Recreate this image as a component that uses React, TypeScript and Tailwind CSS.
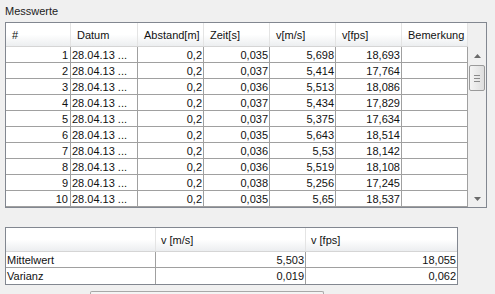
const rows = [
  ["1", "28.04.13 ...", "0,2", "0,035", "5,698", "18,693"],
  ["2", "28.04.13 ...", "0,2", "0,037", "5,414", "17,764"],
  ["3", "28.04.13 ...", "0,2", "0,036", "5,513", "18,086"],
  ["4", "28.04.13 ...", "0,2", "0,037", "5,434", "17,829"],
  ["5", "28.04.13 ...", "0,2", "0,037", "5,375", "17,634"],
  ["6", "28.04.13 ...", "0,2", "0,035", "5,643", "18,514"],
  ["7", "28.04.13 ...", "0,2", "0,036", "5,53", "18,142"],
  ["8", "28.04.13 ...", "0,2", "0,036", "5,519", "18,108"],
  ["9", "28.04.13 ...", "0,2", "0,038", "5,256", "17,245"],
  ["10", "28.04.13 ...", "0,2", "0,035", "5,65", "18,537"],
];

const headers = ["#", "Datum", "Abstand[m]", "Zeit[s]", "v[m/s]", "v[fps]", "Bemerkung"];
const widths = ["w-[65px]", "w-[67px]", "w-[66px]", "w-[66px]", "w-[66px]", "w-[66px]", "w-[66px]"];

export default function App() {
  return (
    <div className="h-[294px] w-[495px] overflow-hidden bg-[#f0f0f0] text-[11px] text-[#111]" style={{ fontFamily: '"Liberation Sans", Arial, sans-serif' }}>
      <div className="h-[22px] pl-[5px] pt-[4px] leading-[14px] text-[#222]">Messwerte</div>

      {/* measurement table */}
      <div className="ml-[5px] flex h-[186px] w-[482px] border border-[#828790] bg-white">
        <div className="flex w-[462px] flex-col">
          <div className="flex h-[24px] border-b border-[#d5d5d5] bg-gradient-to-b from-white via-white to-[#eceef0]">
            {headers.map((h, i) => (
              <div key={h} className={`${widths[i]} flex items-center border-r border-[#e4e4e4] pl-[6px] pt-[2px] leading-none`}>{h}</div>
            ))}
          </div>
          {rows.map((r) => (
            <div key={r[0]} className="flex h-[16px] border-b border-[#a0a0a0] leading-[16px]">
              <div className="w-[65px] border-r border-[#a0a0a0] pr-[2px] text-right">{r[0]}</div>
              <div className="w-[67px] border-r border-[#a0a0a0] pl-[1px]">{r[1]}</div>
              {r.slice(2).map((c, i) => (
                <div key={i} className="w-[66px] border-r border-[#a0a0a0] pr-[1px] text-right">{c}</div>
              ))}
              <div className="w-[66px] border-r border-[#a0a0a0]"></div>
            </div>
          ))}
        </div>
        {/* scrollbar */}
        <div className="flex w-[18px] flex-col bg-[#f0f0f0]">
          <div className="h-[24px]"></div>
          <div className="flex h-[17px] items-center justify-center">
            <svg width="7" height="4" viewBox="0 0 7 4"><path d="M3.5 0L7 4H0z" fill="#6a6a6a" /></svg>
          </div>
          <div className="mx-[1px] mt-[1px] flex h-[26px] flex-col items-center justify-center gap-[2px] rounded-[2px] border border-[#9a9a9a] bg-gradient-to-r from-[#f4f4f4] to-[#dedede]">
            <div className="h-px w-[6px] bg-[#8a8a8a]"></div>
            <div className="h-px w-[6px] bg-[#8a8a8a]"></div>
            <div className="h-px w-[6px] bg-[#8a8a8a]"></div>
          </div>
          <div className="flex-1"></div>
          <div className="flex h-[17px] items-center justify-center">
            <svg width="7" height="4" viewBox="0 0 7 4"><path d="M0 0H7L3.5 4z" fill="#6a6a6a" /></svg>
          </div>
        </div>
      </div>

      {/* summary table */}
      <div className="ml-[5px] mt-[19px] w-[453px] border border-[#828790] bg-white">
        <div className="flex h-[24px] border-b border-[#d5d5d5] bg-gradient-to-b from-white via-white to-[#eceef0]">
          <div className="w-[150px] border-r border-[#e4e4e4]"></div>
          <div className="flex w-[150px] items-center border-r border-[#e4e4e4] pl-[5px] pt-[2px]">v [m/s]</div>
          <div className="flex w-[151px] items-center pl-[5px] pt-[2px]">v [fps]</div>
        </div>
        {[
          ["Mittelwert", "5,503", "18,055"],
          ["Varianz", "0,019", "0,062"],
        ].map((r, i) => (
          <div key={r[0]} className={`flex h-[16px] leading-[16px] ${i === 0 ? "border-b border-[#a0a0a0]" : ""}`}>
            <div className="w-[150px] border-r border-[#a0a0a0] pl-[1px]">{r[0]}</div>
            <div className="w-[150px] border-r border-[#a0a0a0] pr-[1px] text-right">{r[1]}</div>
            <div className="w-[151px] pr-[1px] text-right">{r[2]}</div>
          </div>
        ))}
      </div>

      <div className="ml-[90px] mt-[6px] h-[6px] w-[234px] rounded-t-[2px] border-x border-t border-[#a8a8a8] bg-[#f4f4f4]"></div>
    </div>
  );
}
